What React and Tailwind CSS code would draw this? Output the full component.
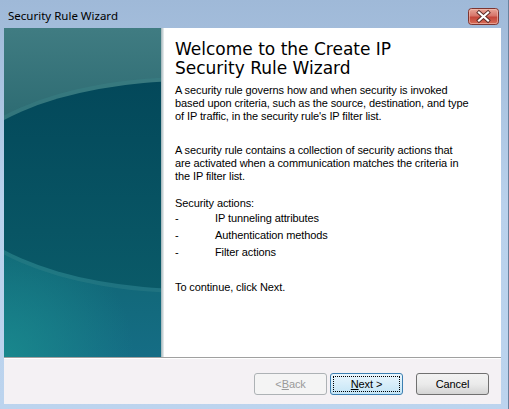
import React from "react";

function CloseButton() {
  return (
    <svg width="31" height="17" viewBox="0 0 31 17" className="block">
      <defs>
        <linearGradient id="cbg" x1="0" y1="0" x2="0" y2="1">
          <stop offset="0" stopColor="#e9a99b" />
          <stop offset="0.45" stopColor="#d7756a" />
          <stop offset="0.55" stopColor="#c4463a" />
          <stop offset="1" stopColor="#d8705a" />
        </linearGradient>
      </defs>
      <rect x="0.5" y="0.5" width="30" height="16" rx="3" fill="url(#cbg)" stroke="#7d3530" />
      <rect x="1.5" y="1.5" width="28" height="14" rx="2" fill="none" stroke="#f3c3b8" strokeOpacity="0.6" />
      <path d="M11 4.5 L20 12.5 M20 4.5 L11 12.5" stroke="#5a2a26" strokeWidth="4" strokeLinecap="square" />
      <path d="M11 4.5 L20 12.5 M20 4.5 L11 12.5" stroke="#ffffff" strokeWidth="2.2" strokeLinecap="square" />
    </svg>
  );
}

function TealPanel() {
  return (
    <svg width="157" height="329" viewBox="0 0 157 329" className="block">
      <defs>
        <linearGradient id="tbg" x1="0" y1="0" x2="0" y2="1">
          <stop offset="0" stopColor="#407c82" />
          <stop offset="0.25" stopColor="#2f6d74" />
          <stop offset="0.6" stopColor="#0f6470" />
          <stop offset="1" stopColor="#156d85" />
        </linearGradient>
        <radialGradient id="tbl" cx="0" cy="329" r="130" gradientUnits="userSpaceOnUse">
          <stop offset="0" stopColor="#1a8c8e" stopOpacity="0.85" />
          <stop offset="1" stopColor="#1a8c8e" stopOpacity="0" />
        </radialGradient>
        <linearGradient id="tel" x1="0" y1="0" x2="0" y2="1">
          <stop offset="0" stopColor="#03485a" />
          <stop offset="1" stopColor="#0a5a68" />
        </linearGradient>
      </defs>
      <rect x="0" y="0" width="157" height="329" fill="url(#tbg)" />
      <rect x="0" y="0" width="157" height="329" fill="url(#tbl)" />
      <ellipse cx="186" cy="157" rx="238" ry="104" fill="none" stroke="#3f8c90" strokeOpacity="0.3" strokeWidth="8" />
      <ellipse cx="186" cy="157" rx="238" ry="104" fill="url(#tel)" />
    </svg>
  );
}

const body = "font-['Liberation_Sans_Narrow','Arial_Narrow','Liberation_Sans',sans-serif] text-[11px] tracking-[-0.1px] text-black";

function Btn({ children, kind }) {
  if (kind === "disabled") {
    return (
      <div className={`w-[73px] h-[22px] rounded-[3px] border border-[#adb2b5] bg-[#f4f4f4] flex items-center justify-center ${body} !text-[#9a9a9a]`}>
        {children}
      </div>
    );
  }
  if (kind === "default") {
    return (
      <div className="w-[73px] h-[22px] rounded-[3px] border border-[#3c7fb1] bg-gradient-to-b from-[#eaf6fd] to-[#c4e5f6] p-[2px]">
        <div className={`w-full h-full border border-dotted border-black flex items-center justify-center ${body}`}>
          {children}
        </div>
      </div>
    );
  }
  return (
    <div className="w-[73px] h-[22px] rounded-[3px] border border-[#707070] bg-gradient-to-b from-[#f2f2f2] via-[#ebebeb] to-[#d4d4d4] flex items-center justify-center">
      <span className={body}>{children}</span>
    </div>
  );
}

export default function App() {
  return (
    <div className="w-[509px] h-[409px] overflow-hidden relative bg-gradient-to-b from-[#9fb9d8] via-[#b9d1ec] to-[#bcd4ee]">
      <div className="absolute right-0 top-0 w-[1px] h-full bg-[#6a819c]" />
      <div className="h-[28px] flex items-center justify-between pl-[8px] pr-[10px]">
        <span className="font-['Noto_Sans',sans-serif] text-[11.5px] text-black leading-none mt-[4px]">Security Rule Wizard</span>
        <div className="mt-[4px]">
          <CloseButton />
        </div>
      </div>
      <div className="ml-[4px] w-[497px] h-[376px] flex flex-col bg-[#f4f1f4]">
        <div className="h-[329px] flex bg-white">
          <TealPanel />
          <div className="w-[3px] h-full bg-gradient-to-r from-[#9fb3b8] to-[#eef1f2]" />
          <div className="flex-1 pl-[11px] pt-[12px]">
            <div className="font-['DejaVu_Sans',sans-serif] text-[17px] leading-[19px] text-black">
              Welcome to the Create IP
              <br />
              Security Rule Wizard
            </div>
            <div className={`${body} leading-[13px] mt-[6px]`}>
              A security rule governs how and when security is invoked
              <br />
              based upon criteria, such as the source, destination, and type
              <br />
              of IP traffic, in the security rule's IP filter list.
            </div>
            <div className={`${body} leading-[13px] mt-[21px]`}>
              A security rule contains a collection of security actions that
              <br />
              are activated when a communication matches the criteria in
              <br />
              the IP filter list.
            </div>
            <div className={`${body} leading-[13px] mt-[14px]`}>Security actions:</div>
            <div className={`${body} leading-[17px]`}>
              <div className="flex"><span className="w-[40px]">-</span><span>IP tunneling attributes</span></div>
              <div className="flex"><span className="w-[40px]">-</span><span>Authentication methods</span></div>
              <div className="flex"><span className="w-[40px]">-</span><span>Filter actions</span></div>
            </div>
            <div className={`${body} leading-[13px] mt-[20px]`}>To continue, click Next.</div>
          </div>
        </div>
        <div className="h-[1px] bg-[#a0a0a0]" />
        <div className="h-[1px] bg-white" />
        <div className="flex-1 flex items-start justify-end pt-[14px] pr-[12px]">
          <Btn kind="disabled">
            &lt; <span className="underline">B</span>ack
          </Btn>
          <div className="w-[3px]" />
          <Btn kind="default">
            <span className="underline">N</span>ext &gt;
          </Btn>
          <div className="w-[13px]" />
          <Btn>Cancel</Btn>
        </div>
      </div>
    </div>
  );
}
